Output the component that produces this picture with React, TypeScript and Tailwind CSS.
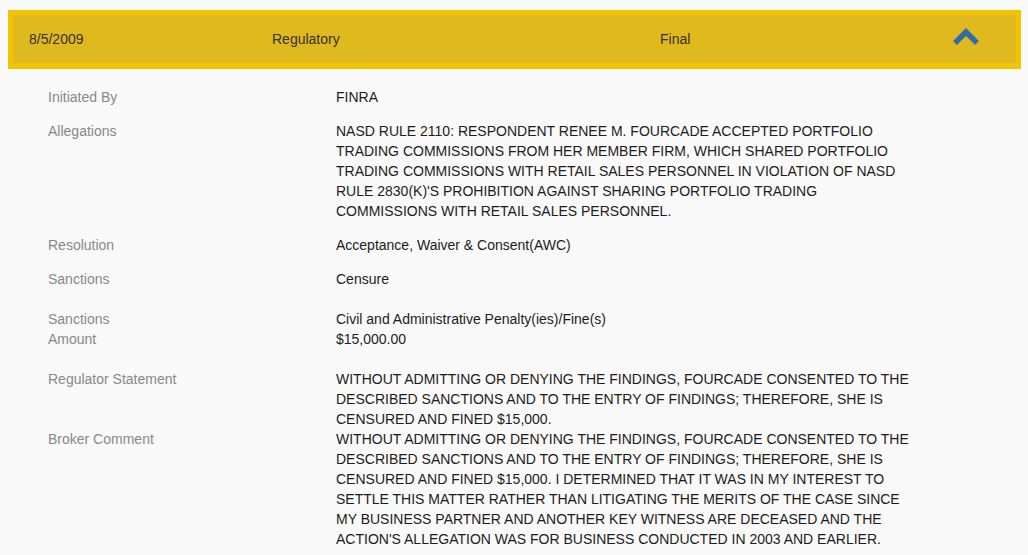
const rows: { label: string[]; value: string[]; pb: string }[] = [
  { label: ["Initiated By"], value: ["FINRA"], pb: "pb-[14px]" },
  {
    label: ["Allegations"],
    value: [
      "NASD RULE 2110: RESPONDENT RENEE M. FOURCADE ACCEPTED PORTFOLIO",
      "TRADING COMMISSIONS FROM HER MEMBER FIRM, WHICH SHARED PORTFOLIO",
      "TRADING COMMISSIONS WITH RETAIL SALES PERSONNEL IN VIOLATION OF NASD",
      "RULE 2830(K)'S PROHIBITION AGAINST SHARING PORTFOLIO TRADING",
      "COMMISSIONS WITH RETAIL SALES PERSONNEL.",
    ],
    pb: "pb-[14px]",
  },
  { label: ["Resolution"], value: ["Acceptance, Waiver & Consent(AWC)"], pb: "pb-[14px]" },
  { label: ["Sanctions"], value: ["Censure"], pb: "pb-[20px]" },
  {
    label: ["Sanctions", "Amount"],
    value: ["Civil and Administrative Penalty(ies)/Fine(s)", "$15,000.00"],
    pb: "pb-[20px]",
  },
  {
    label: ["Regulator Statement"],
    value: [
      "WITHOUT ADMITTING OR DENYING THE FINDINGS, FOURCADE CONSENTED TO THE",
      "DESCRIBED SANCTIONS AND TO THE ENTRY OF FINDINGS; THEREFORE, SHE IS",
      "CENSURED AND FINED $15,000.",
    ],
    pb: "pb-0",
  },
  {
    label: ["Broker Comment"],
    value: [
      "WITHOUT ADMITTING OR DENYING THE FINDINGS, FOURCADE CONSENTED TO THE",
      "DESCRIBED SANCTIONS AND TO THE ENTRY OF FINDINGS; THEREFORE, SHE IS",
      "CENSURED AND FINED $15,000. I DETERMINED THAT IT WAS IN MY INTEREST TO",
      "SETTLE THIS MATTER RATHER THAN LITIGATING THE MERITS OF THE CASE SINCE",
      "MY BUSINESS PARTNER AND ANOTHER KEY WITNESS ARE DECEASED AND THE",
      "ACTION'S ALLEGATION WAS FOR BUSINESS CONDUCTED IN 2003 AND EARLIER.",
    ],
    pb: "pb-[14px]",
  },
];

export default function App() {
  return (
    <div className="bg-[#f9f9f9] min-h-screen w-[1028px] h-[555px] overflow-hidden pt-[10px] font-['Liberation_Sans',Arial,sans-serif] text-[14px] leading-[20px]">
      {/* header bar */}
      <div className="ml-2 w-[1013px] h-[59px] border-[5px] border-t-[5px] border-b-[6px] border-[#f2c300] bg-[#e0b91f] flex items-center text-[#333]">
        <div className="w-[259px] pl-4">8/5/2009</div>
        <div className="w-[388px]">Regulatory</div>
        <div className="w-[292px]">Final</div>
        <svg width="28" height="20" viewBox="0 0 28 20" className="mt-[-5px]">
          <polyline
            points="3,16 14,5 25,16"
            fill="none"
            stroke="#2f6ea5"
            strokeWidth="5.5"
            strokeLinejoin="miter"
          />
        </svg>
      </div>

      {/* details */}
      <div className="pt-[18px] pl-12">
        {rows.map((r, i) => (
          <div key={i} className={`flex ${r.pb}`}>
            <div className="w-[288px] text-[#888]">
              {r.label.map((l, j) => (
                <div key={j}>{l}</div>
              ))}
            </div>
            <div className="text-[#1c1c1c] whitespace-nowrap">
              {r.value.map((v, j) => (
                <div key={j}>{v}</div>
              ))}
            </div>
          </div>
        ))}
      </div>
    </div>
  );
}
